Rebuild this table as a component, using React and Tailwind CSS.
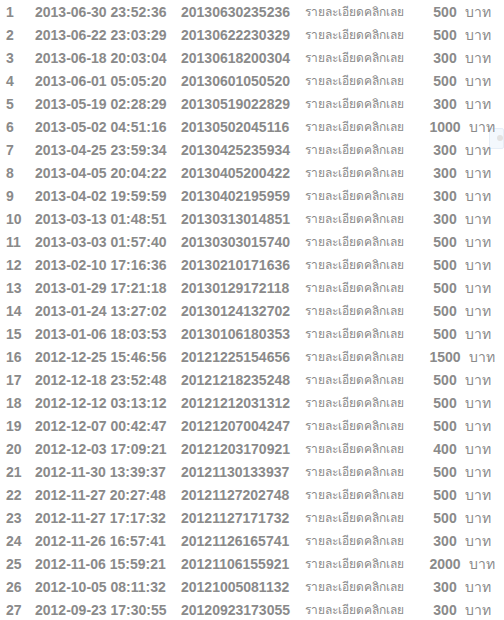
import React from "react";

const rows = [
  ["2013-06-30 23:52:36", "20130630235236", "500"],
  ["2013-06-22 23:03:29", "20130622230329", "500"],
  ["2013-06-18 20:03:04", "20130618200304", "300"],
  ["2013-06-01 05:05:20", "20130601050520", "500"],
  ["2013-05-19 02:28:29", "20130519022829", "300"],
  ["2013-05-02 04:51:16", "20130502045116", "1000"],
  ["2013-04-25 23:59:34", "20130425235934", "300"],
  ["2013-04-05 20:04:22", "20130405200422", "300"],
  ["2013-04-02 19:59:59", "20130402195959", "300"],
  ["2013-03-13 01:48:51", "20130313014851", "300"],
  ["2013-03-03 01:57:40", "20130303015740", "500"],
  ["2013-02-10 17:16:36", "20130210171636", "500"],
  ["2013-01-29 17:21:18", "20130129172118", "500"],
  ["2013-01-24 13:27:02", "20130124132702", "500"],
  ["2013-01-06 18:03:53", "20130106180353", "500"],
  ["2012-12-25 15:46:56", "20121225154656", "1500"],
  ["2012-12-18 23:52:48", "20121218235248", "500"],
  ["2012-12-12 03:13:12", "20121212031312", "500"],
  ["2012-12-07 00:42:47", "20121207004247", "500"],
  ["2012-12-03 17:09:21", "20121203170921", "400"],
  ["2012-11-30 13:39:37", "20121130133937", "500"],
  ["2012-11-27 20:27:48", "20121127202748", "500"],
  ["2012-11-27 17:17:32", "20121127171732", "500"],
  ["2012-11-26 16:57:41", "20121126165741", "300"],
  ["2012-11-06 15:59:21", "20121106155921", "2000"],
  ["2012-10-05 08:11:32", "20121005081132", "300"],
  ["2012-09-23 17:30:55", "20120923173055", "300"],
];

export default function App() {
  return (
    <div className="relative w-[504px] h-[620px] bg-white overflow-hidden text-[#8a8a8a] font-['Liberation_Sans',Arial,sans-serif]">
      <div className="absolute left-[489px] top-[128px] w-[15px] h-[21px] bg-[#f3f8fd] border border-[#e6eef7] rounded-[2px]">
        <div className="absolute left-[7px] top-[6px] w-[6px] h-[6px] rounded-full bg-[#e2e2e2]" />
      </div>
      <div className="relative flex flex-col">
        {rows.map((r, i) => (
          <div key={i} className="grid grid-cols-[35px_146px_124px_118px_78px] h-[23px] items-center">
            <div className="pl-[6px] text-[14px] font-bold">{i + 1}</div>
            <div className="text-[14px] font-bold whitespace-nowrap">{r[0]}</div>
            <div className="text-[14px] font-bold">{r[1]}</div>
            <div className="text-[12px] whitespace-nowrap">รายละเอียดคลิกเลย</div>
            <div className="text-center whitespace-nowrap">
              <span className="text-[14px] font-bold">{r[2]}</span>
              <span className="ml-[8px] text-[14px] font-medium">บาท</span>
            </div>
          </div>
        ))}
      </div>
    </div>
  );
}
